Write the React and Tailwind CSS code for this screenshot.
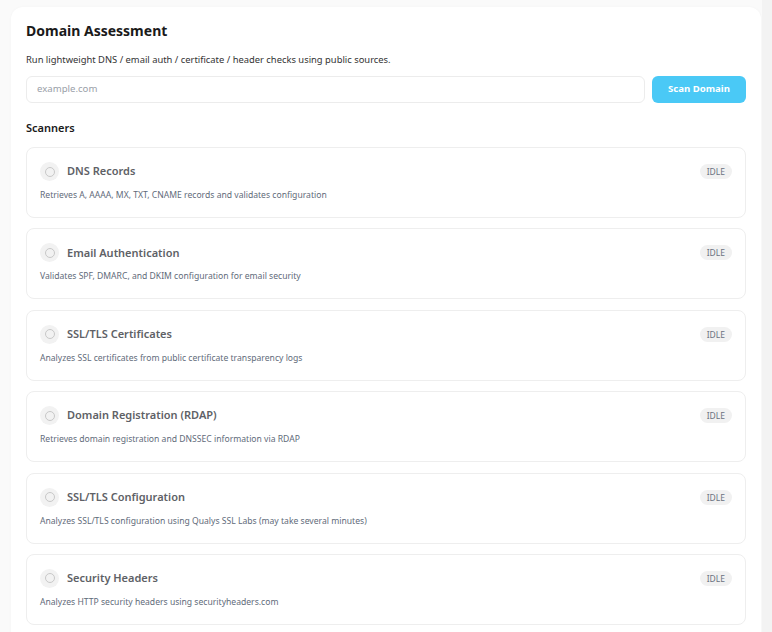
import React from "react";

const scanners = [
  { name: "DNS Records", desc: "Retrieves A, AAAA, MX, TXT, CNAME records and validates configuration" },
  { name: "Email Authentication", desc: "Validates SPF, DMARC, and DKIM configuration for email security" },
  { name: "SSL/TLS Certificates", desc: "Analyzes SSL certificates from public certificate transparency logs" },
  { name: "Domain Registration (RDAP)", desc: "Retrieves domain registration and DNSSEC information via RDAP" },
  { name: "SSL/TLS Configuration", desc: "Analyzes SSL/TLS configuration using Qualys SSL Labs (may take several minutes)" },
  { name: "Security Headers", desc: "Analyzes HTTP security headers using securityheaders.com" },
];

function ScannerCard({ name, desc }) {
  return (
    <div className="h-[71px] rounded-[8px] border border-[#eeeeee] bg-white pl-[13px] pr-[13px] pt-[14px]">
      <div className="flex items-center justify-between">
        <div className="flex items-center gap-[8px]">
          <div className="flex h-[19px] w-[19px] items-center justify-center rounded-full bg-[#f2f2f2]">
            <div className="h-[10px] w-[10px] rounded-full border border-[#c8c8c8]" />
          </div>
          <span className="text-[11px] font-semibold text-[#5e6166]">{name}</span>
        </div>
        <span className="rounded-full bg-[#f1f1f1] px-[7px] py-[1px] text-[8.5px] leading-[13px] text-[#6b7280]">IDLE</span>
      </div>
      <p className="mt-[8px] text-[8.6px] leading-[12px] text-[#5f6b7a]">{desc}</p>
    </div>
  );
}

export default function App() {
  return (
    <div className="flex min-h-[632px] bg-[#fafafa]" style={{ fontFamily: '"Noto Sans", sans-serif' }}>
      <div className="flex-1 pl-[11px] pr-[1px] pt-[7px]">
        <div className="rounded-t-[12px] bg-white px-[15px] pt-[14px] pb-[10px] shadow-[0_0_3px_rgba(0,0,0,0.03)]">
          <h1 className="text-[14px] font-bold leading-[20px] text-[#1a1a1a]">Domain Assessment</h1>
          <p className="mt-[13px] text-[9.4px] leading-[12px] text-[#333]">
            Run lightweight DNS / email auth / certificate / header checks using public sources.
          </p>
          <div className="mt-[10px] flex gap-[7px]">
            <div className="flex h-[27px] flex-1 items-center rounded-[6px] border border-[#ececec] bg-white px-[10px] text-[9.6px] text-[#9aa0a8]">
              example.com
            </div>
            <button className="h-[27px] w-[94px] rounded-[6px] bg-[#4ac9f6] text-[9.6px] font-bold text-white">
              Scan Domain
            </button>
          </div>
          <h2 className="mt-[17px] text-[11px] font-semibold leading-[16px] text-[#1a1a1a]">Scanners</h2>
          <div className="mt-[11px] flex flex-col gap-[10.4px]">
            {scanners.map((s) => (
              <ScannerCard key={s.name} {...s} />
            ))}
          </div>
        </div>
      </div>
      <div className="w-[10px] bg-[#f3f3f3]" />
    </div>
  );
}
